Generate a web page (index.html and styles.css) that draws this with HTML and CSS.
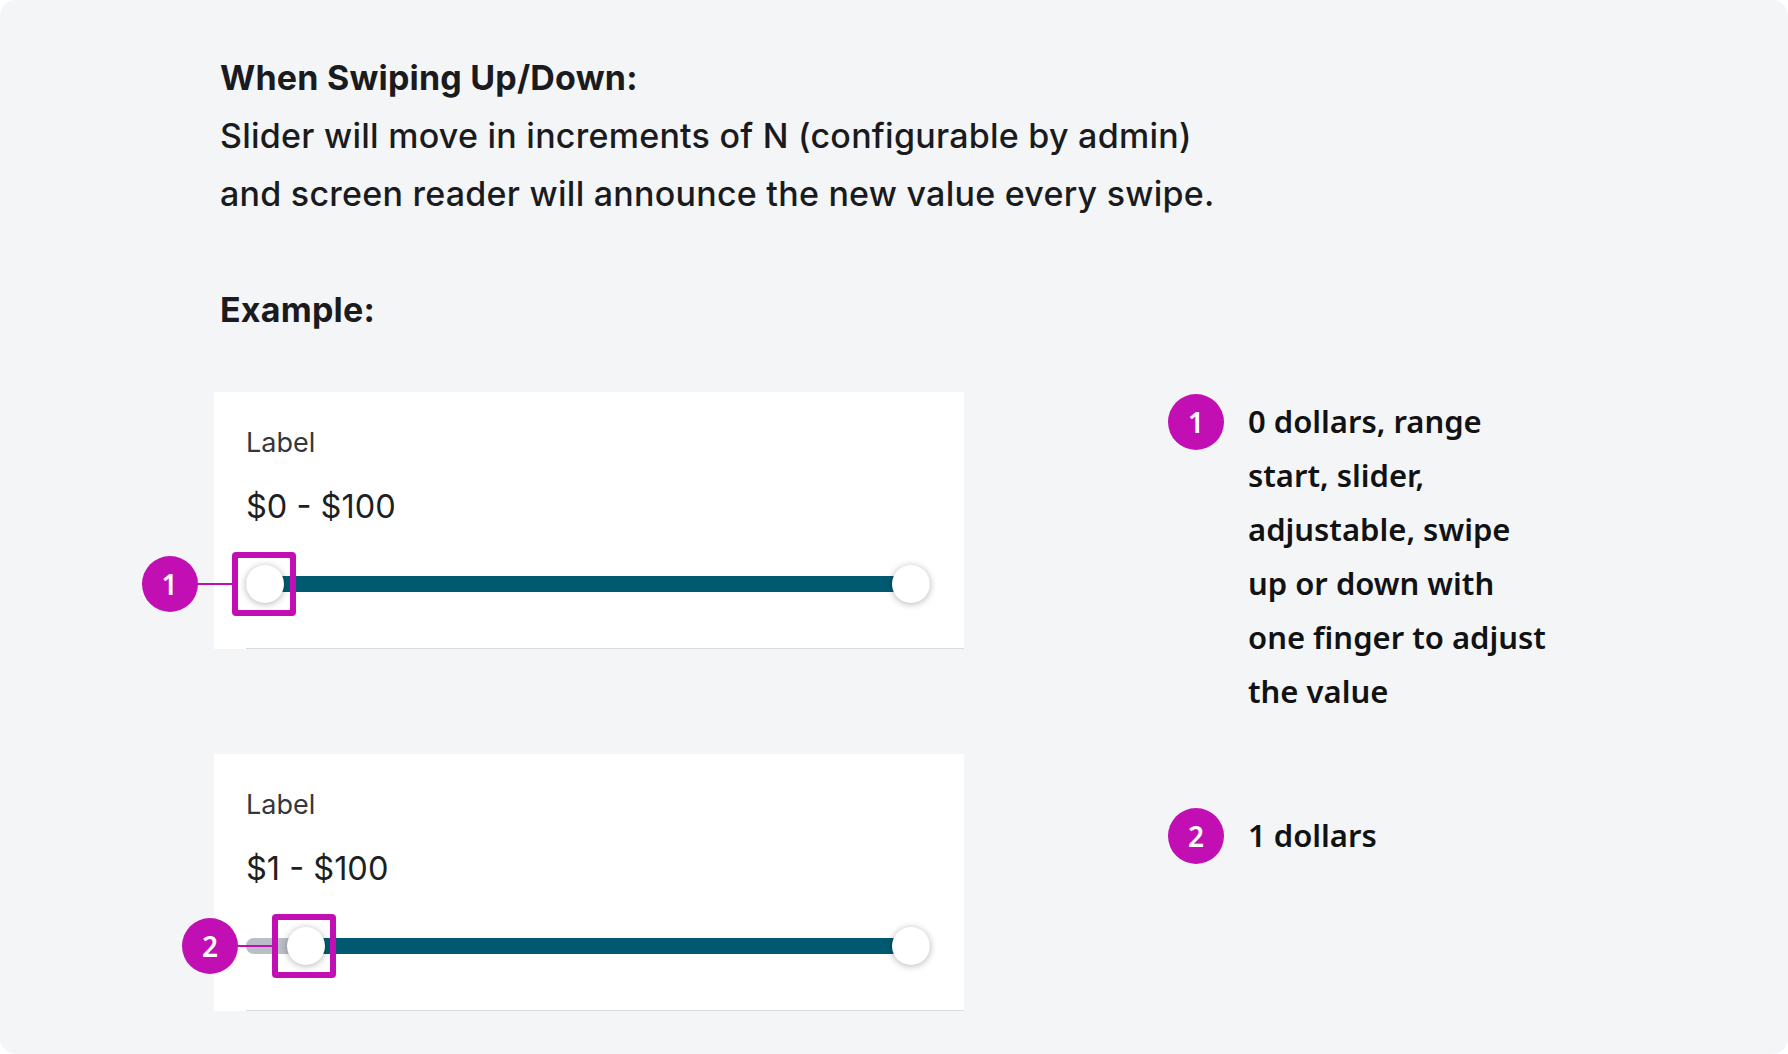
FILE: index.html
```html
<!DOCTYPE html>
<html lang="en">
<head>
<meta charset="utf-8">
<title>Slider swipe behaviour</title>
<link rel="stylesheet" href="styles.css">
</head>
<body>
<main class="page">
  <section class="intro">
    <h2 class="intro-title">When Swiping Up/Down:</h2>
    <p class="intro-text">Slider will move in increments of N (configurable by admin)<br>and screen reader will announce the new value every swipe.</p>
    <h2 class="intro-title example-title">Example:</h2>
  </section>

  <section class="examples">
    <div class="card">
      <div class="field">
        <div class="field-label">Label</div>
        <div class="field-value">$0 - $100</div>
        <div class="slider">
          <div class="rail"></div>
          <div class="fill" style="left: 19px"></div>
          <div class="thumb thumb-end"></div>
          <div class="marker" style="left: 19px">
            <span class="badge badge-pin">1</span>
            <span class="lead"></span>
            <span class="focus-box"></span>
          </div>
          <div class="thumb" style="left: 0px"></div>
        </div>
      </div>
    </div>
    <div class="note">
      <span class="badge">1</span>
      <p class="note-text">0 dollars, range<br>start, slider,<br>adjustable, swipe<br>up or down with<br>one finger to adjust<br>the value</p>
    </div>

    <div class="card">
      <div class="field">
        <div class="field-label">Label</div>
        <div class="field-value">$1 - $100</div>
        <div class="slider">
          <div class="rail"></div>
          <div class="fill" style="left: 59.5px"></div>
          <div class="thumb thumb-end"></div>
          <div class="marker" style="left: 59.5px">
            <span class="badge badge-pin">2</span>
            <span class="lead"></span>
            <span class="focus-box"></span>
          </div>
          <div class="thumb" style="left: 40.5px"></div>
        </div>
      </div>
    </div>
    <div class="note note-2">
      <span class="badge">2</span>
      <p class="note-text">1 dollars</p>
    </div>
  </section>
</main>
</body>
</html>
```

FILE: styles.css
```css
* { box-sizing: border-box; }

html, body {
  margin: 0;
  padding: 0;
  background: #ffffff;
}

.page {
  width: 1788px;
  height: 1054px;
  background: #f4f5f7;
  border-radius: 16px;
  padding: 49px 0 0 214px;
  overflow: hidden;
}

.intro {
  padding-left: 6px;
  color: #1a1b1e;
  font-family: Inter, "Liberation Sans", sans-serif;
}

.intro-title {
  margin: 0;
  font-size: 34px;
  line-height: 58px;
  font-weight: 700;
  letter-spacing: 0.2px;
}

.intro-text {
  margin: 0;
  font-size: 34px;
  line-height: 58px;
  font-weight: 500;
  letter-spacing: 0.25px;
}

.example-title {
  margin-top: 58px;
}

.examples {
  margin-top: 53px;
  display: grid;
  grid-template-columns: 750px auto;
  grid-template-rows: 257px 257px;
  column-gap: 204px;
  row-gap: 105px;
  align-items: start;
}

.card {
  background: #ffffff;
  height: 257px;
  padding-left: 32px;
}

.field {
  height: 257px;
  border-bottom: 1px solid #d9dce1;
  padding: 36px 34px 0 0;
  font-family: Inter, "Liberation Sans", sans-serif;
}

.field-label {
  font-size: 27px;
  line-height: 30px;
  color: #34373c;
}

.field-value {
  margin-top: 29px;
  font-size: 32.5px;
  line-height: 40px;
  color: #1e1f22;
}

.slider {
  position: relative;
  margin-top: 38px;
  height: 38px;
}

.rail {
  position: absolute;
  left: 0;
  right: 0;
  top: 11px;
  height: 16px;
  border-radius: 8px;
  background: #b9bdc5;
}

.fill {
  position: absolute;
  right: 19px;
  top: 11px;
  height: 16px;
  background: #005a6f;
}

.thumb {
  position: absolute;
  top: 0;
  width: 38px;
  height: 38px;
  border-radius: 50%;
  background: #ffffff;
  box-shadow: 0 1px 7px rgba(0, 0, 0, 0.3);
}

.thumb-end {
  right: 0;
}

.marker {
  position: absolute;
  top: 19px;
  width: 0;
  height: 0;
}

.focus-box {
  position: absolute;
  left: -33.5px;
  top: -32px;
  width: 64px;
  height: 64px;
  border: 6px solid #c20fb4;
  border-radius: 4px;
  z-index: 2;
}

.lead {
  position: absolute;
  left: -68px;
  top: -1px;
  width: 38px;
  height: 2px;
  background: #c20fb4;
}

.badge {
  display: flex;
  align-items: center;
  justify-content: center;
  flex: none;
  width: 56px;
  height: 56px;
  border-radius: 50%;
  background: #c20fb4;
  color: #ffffff;
  font-family: "Noto Sans", "Open Sans", sans-serif;
  font-weight: 600;
  font-size: 28px;
  line-height: 1;
}

.badge-pin {
  position: absolute;
  left: -123.5px;
  top: -28px;
}

.note {
  margin-top: 2px;
  display: flex;
  align-items: flex-start;
  gap: 24px;
}

.note-2 {
  margin-top: 54px;
}

.note-text {
  margin: 0;
  font-family: "Noto Sans", "Open Sans", sans-serif;
  font-weight: 600;
  font-size: 31px;
  line-height: 54px;
  color: #111214;
}
```
